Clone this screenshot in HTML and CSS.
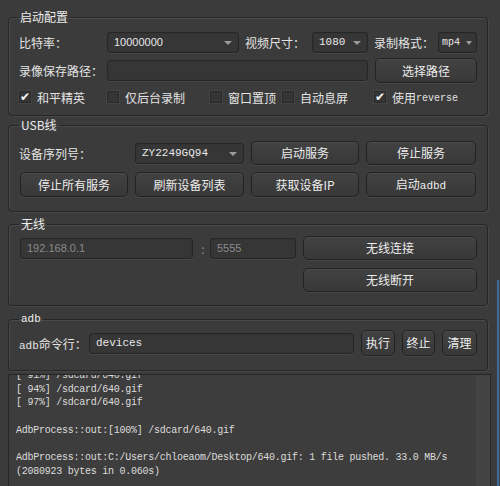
FILE: index.html
```html
<!DOCTYPE html>
<html lang="zh">
<head>
    <meta charset="UTF-8">
    <title>录屏工具</title>
    <link rel="stylesheet" href="styles.css">
</head>
<body>
    <fieldset class="group g-config">
        <legend>启动配置</legend>
        <div class="row row-1">
            <span class="label w88">比特率：</span>
            <div class="combo w132 sans">10000000</div>
            <span class="label w67">视频尺寸：</span>
            <div class="combo w56">1080</div>
            <span class="label w64">录制格式：</span>
            <div class="combo w39 small">mp4</div>
        </div>
        <div class="row row-2">
            <span class="label w88">录像保存路径：</span>
            <div class="input w261"></div>
            <button class="btn w102">选择路径</button>
        </div>
        <div class="row row-3">
            <label class="check w88"><span class="box on">✔</span>和平精英</label>
            <label class="check w103"><span class="box"></span>仅后台录制</label>
            <label class="check w72"><span class="box"></span>窗口置顶</label>
            <label class="check w92"><span class="box"></span>自动息屏</label>
            <label class="check"><span class="box on">✔</span>使用<span class="mono">reverse</span></label>
        </div>
    </fieldset>

    <fieldset class="group g-usb">
        <legend>USB线</legend>
        <div class="grid4">
            <span class="label">设备序列号：</span>
            <div class="combo">ZY2249GQ94</div>
            <button class="btn">启动服务</button>
            <button class="btn">停止服务</button>
            <button class="btn">停止所有服务</button>
            <button class="btn">刷新设备列表</button>
            <button class="btn">获取设备IP</button>
            <button class="btn">启动<span class="mono">adbd</span></button>
        </div>
    </fieldset>

    <fieldset class="group g-wifi">
        <legend>无线</legend>
        <div class="wifi">
            <div class="input disabled">192.168.0.1</div>
            <span class="colon">:</span>
            <div class="input disabled">5555</div>
            <button class="btn">无线连接</button>
            <button class="btn second">无线断开</button>
        </div>
    </fieldset>

    <fieldset class="group g-adb">
        <legend class="mono">adb</legend>
        <div class="row">
            <span class="label w70"><span class="mono">adb</span>命令行：</span>
            <div class="input w265 mono">devices</div>
            <button class="btn w34">执行</button>
            <button class="btn w33">终止</button>
            <button class="btn w35">清理</button>
        </div>
    </fieldset>

    <div class="log">
        <pre>[ 91%] /sdcard/640.gif
[ 94%] /sdcard/640.gif
[ 97%] /sdcard/640.gif

AdbProcess::out:[100%] /sdcard/640.gif

AdbProcess::out:C:/Users/chloeaom/Desktop/640.gif: 1 file pushed. 33.0 MB/s
(2080923 bytes in 0.060s)</pre>
        <div class="scroll"></div>
    </div>
    <div class="edge"></div>
</body>
</html>
```

FILE: styles.css
```css
body {
    margin: 0;
    padding: 9px 12px 0 8px;
    height: 486px;
    box-sizing: border-box;
    overflow: hidden;
    position: relative;
    background-color: #3b3b3b;
    color: #e4e4e4;
    font-family: "Noto Sans CJK SC", "Liberation Sans", sans-serif;
    font-size: 12px;
}
.mono {
    font-family: "Liberation Mono", "Noto Sans CJK SC", monospace;
    font-size: 11px;
}
.sans {
    font-family: "Liberation Sans", sans-serif;
}
.group {
    margin: 0;
    padding: 0 10px 0 11px;
    border: 1px solid #262626;
    border-radius: 4px;
    box-shadow: inset 1px 1px 0 #4a4a4a, 1px 1px 0 #474747;
    min-width: 0;
}
.group legend {
    padding: 0 2px;
    margin-left: -1px;
    line-height: 16px;
    height: 16px;
    color: #ececec;
}
.g-config {
    padding-left: 10px;
    padding-bottom: 10px;
}
.g-usb {
    margin-top: 1px;
    padding-bottom: 14px;
}
.g-wifi {
    margin-top: 4px;
    padding-bottom: 13px;
}
.g-adb {
    margin-top: 5px;
    padding-bottom: 14px;
}
.row {
    display: flex;
    align-items: center;
}
.row-1 {
    margin-top: 6px;
    height: 22px;
}
.row-2 {
    margin-top: 5px;
    height: 25px;
}
.row-3 {
    margin-top: 6px;
    height: 16px;
}
.label {
    white-space: nowrap;
    flex: none;
}
.w33 { width: 33px; }
.w34 { width: 34px; }
.w35 { width: 35px; }
.w39 { width: 39px; }
.w56 { width: 56px; }
.w64 { width: 64px; }
.w67 { width: 67px; }
.w70 { width: 70px; }
.w72 { width: 72px; }
.w88 { width: 88px; }
.w92 { width: 92px; }
.w102 { width: 102px; }
.w103 { width: 103px; }
.w132 { width: 132px; }
.w261 { width: 261px; }
.w265 { width: 265px; }

.combo,
.input {
    box-sizing: border-box;
    height: 21px;
    line-height: 19px;
    padding: 0 6px;
    background-color: #363636;
    border: 1px solid #262626;
    border-radius: 3px;
    box-shadow: inset 0 0 0 1px #333, 0 1px 0 #464646;
    flex: none;
    font-family: "Liberation Mono", monospace;
    font-size: 11px;
    color: #e8e8e8;
    white-space: nowrap;
    overflow: hidden;
}
.combo {
    position: relative;
    margin-right: 6px;
    padding-right: 16px;
}
.combo.sans {
    font-family: "Liberation Sans", sans-serif;
    font-size: 11px;
}
.combo.small {
    padding-left: 3px;
    font-size: 10px;
    margin-right: 0;
}
.combo::after {
    content: "";
    position: absolute;
    right: 6px;
    top: 8px;
    border-left: 4px solid transparent;
    border-right: 4px solid transparent;
    border-top: 4px solid #9a9a9a;
}
.combo.small::after {
    right: 4px;
    border-left-width: 3px;
    border-right-width: 3px;
}
.input.disabled {
    color: #8a8a8a;
    font-family: "Liberation Sans", sans-serif;
    font-size: 11px;
}

.btn {
    box-sizing: border-box;
    height: 24px;
    padding: 0;
    margin-left: 7px;
    flex: none;
    background: linear-gradient(#424242, #383838);
    border: 1px solid #222;
    border-radius: 5px;
    box-shadow: inset 0 1px 0 #4c4c4c, 0 1px 0 #474747;
    color: #ececec;
    font-family: "Noto Sans CJK SC", "Liberation Sans", sans-serif;
    font-size: 12px;
    line-height: 20px;
    cursor: pointer;
}
.row-2 .btn {
    height: 25px;
}
.g-adb .btn {
    height: 26px;
}

.check {
    display: flex;
    align-items: center;
    white-space: nowrap;
    flex: none;
}
.box {
    box-sizing: border-box;
    width: 12px;
    height: 12px;
    margin-right: 6px;
    background-color: #353535;
    border: 1px solid #2a2a2a;
    box-shadow: 0 0 0 1px #444;
    color: #f4f4f4;
    font-size: 12px;
    line-height: 10px;
    text-align: center;
    font-family: "DejaVu Sans", sans-serif;
}
.check .mono {
    font-size: 10px;
    margin-top: 2px;
}

.grid4 {
    display: grid;
    grid-template-columns: 108px 109px 108px 110px;
    column-gap: 7px;
    row-gap: 7px;
    margin-top: 8px;
    align-items: center;
}
.grid4 .label {
    margin-left: -1px;
}
.grid4 .btn {
    margin: 0;
    width: 100%;
}
.grid4 .btn:nth-child(n+5) {
    height: 25px;
}
.grid4 .combo {
    margin: 0;
}

.wifi {
    display: grid;
    grid-template-columns: 173px 17px 86px 181px;
    row-gap: 8px;
    margin-top: 4px;
    align-items: center;
}
.colon {
    text-align: center;
    color: #8a8a8a;
    padding-left: 3px;
}
.wifi .input {
    width: 100%;
}
.wifi .btn {
    margin-left: 7px;
    width: 174px;
}
.wifi .second {
    grid-column: 4;
}

.g-adb .row {
    margin-top: 3px;
    height: 26px;
}
.g-adb .label {
    margin-left: -1px;
}

.log {
    position: relative;
    margin-top: 3px;
    height: 120px;
    margin-right: -3px;
    border: 1px solid #262626;
    background-color: #3d3d3d;
    overflow: hidden;
}
.log pre {
    margin: -6px 0 0 7px;
    font-family: "Liberation Mono", monospace;
    font-size: 10px;
    letter-spacing: -0.25px;
    line-height: 13.7px;
    color: #dcdcdc;
}
.scroll {
    position: absolute;
    top: 0;
    right: 0;
    bottom: 0;
    width: 14px;
    background-color: #434343;
    border-left: 1px solid #3f3f3f;
}
.edge {
    position: absolute;
    right: 1px;
    top: 280px;
    bottom: 0;
    width: 2px;
    background-color: #3f6b98;
}
```
